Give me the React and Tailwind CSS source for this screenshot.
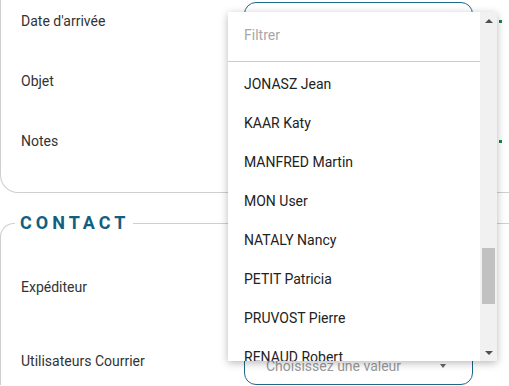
import React from 'react';

const utilisateurs = [
  'JONASZ Jean',
  'KAAR Katy',
  'MANFRED Martin',
  'MON User',
  'NATALY Nancy',
  'PETIT Patricia',
  'PRUVOST Pierre',
  'RENAUD Robert',
];

const Ligne = ({ label, showInput, dot }) => (
  <div className="flex items-center h-[38px]">
    <div className="w-[223px] text-sm text-[#333]">{label}</div>
    <div
      className={`w-[229px] h-[38px] rounded-[12px] ${showInput ? 'border border-[#1d6787]' : ''}`}
    />
    {dot && <div className="ml-[26px] w-[3px] h-[3px] bg-[#13873f]" />}
  </div>
);

const App = () => {
  return (
    <div className="relative w-[509px] h-[386px] overflow-hidden bg-white font-['Roboto',sans-serif]">
      {/* Bloc courrier */}
      <div className="border-l border-b border-[#cfcfcf] rounded-bl-[18px] pl-5 pt-[2px] pb-[32px] flex flex-col gap-[22px]">
        <Ligne label="Date d'arrivée" showInput dot />
        <Ligne label="Objet" />
        <Ligne label="Notes" dot />
      </div>

      {/* Contact */}
      <fieldset className="mt-[18px] border-t border-l border-[#cfcfcf] rounded-tl-[14px]">
        <legend className="ml-[14px] pl-[5px] pr-[4px] text-[18px] leading-6 font-bold tracking-[4px] text-[#135f7f]">
          CONTACT
        </legend>
        <div className="pl-5">
          <div className="mt-[33px] flex items-center h-[38px]">
            <div className="w-[223px] text-sm text-[#333]">Expéditeur</div>
            <div className="w-[229px] h-[38px]" />
          </div>
          <div className="mt-[40px] flex items-start h-[39px]">
            <div className="w-[223px] pt-[5px] text-sm text-[#333]">Utilisateurs Courrier</div>
            <div className="w-[229px] h-[39px] border border-[#1d6787] rounded-[12px] flex items-center justify-between pl-[21px] pr-[26px]">
              <span className="text-sm text-[#9a9a9a]">Choisissez une valeur</span>
              <span className="w-0 h-0 border-l-[3.5px] border-r-[3.5px] border-t-[4px] border-l-transparent border-r-transparent border-t-[#666]" />
            </div>
          </div>
        </div>
      </fieldset>

      {/* Liste déroulante */}
      <div className="absolute left-[228px] top-[12px] w-[269px] h-[349px] bg-white shadow-[0_2px_8px_rgba(0,0,0,0.28)] flex z-10">
        <div className="w-[252px] flex flex-col overflow-hidden">
          <div className="h-[50px] shrink-0 flex items-center px-4 pb-[3px] border-b border-[#cccccc] text-sm text-[#a8a8a8]">
            Filtrer
          </div>
          <div className="pt-[2px]">
            {utilisateurs.map((u) => (
              <div key={u} className="h-[39px] shrink-0 flex items-center px-4 text-sm text-[#222]">
                {u}
              </div>
            ))}
          </div>
        </div>
        <div className="w-[17px] bg-[#f1f1f1] flex flex-col">
          <div className="h-[17px] flex items-center justify-center">
            <span className="w-0 h-0 border-l-[4px] border-r-[4px] border-b-[4px] border-l-transparent border-r-transparent border-b-[#505050]" />
          </div>
          <div className="mt-[219px] mx-[2px] h-[56px] bg-[#c1c1c1]" />
          <div className="flex-1" />
          <div className="h-[17px] flex items-center justify-center">
            <span className="w-0 h-0 border-l-[4px] border-r-[4px] border-t-[4px] border-l-transparent border-r-transparent border-t-[#505050]" />
          </div>
        </div>
      </div>
    </div>
  );
};

export default App;
